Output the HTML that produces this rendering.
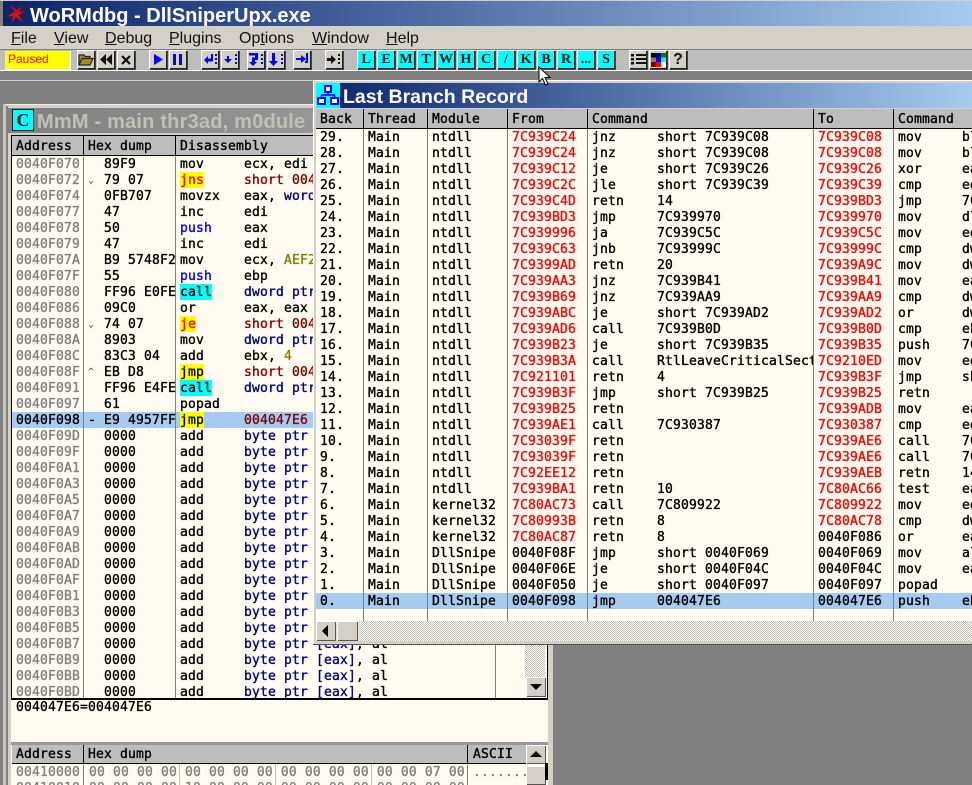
<!DOCTYPE html>
<html><head><meta charset="utf-8"><style>
html,body{margin:0;padding:0;width:972px;height:785px;overflow:hidden;background:#808080}
div,pre,svg{position:absolute}
pre{margin:0;font:13px/16px "DejaVu Sans Mono","Liberation Mono",monospace;letter-spacing:.17px;color:#000;overflow:hidden;-webkit-text-stroke:.35px currentColor}
pre b{font-weight:normal;display:inline-block;height:15px;vertical-align:top}
.r{color:#f00}.g{color:#808080}.n{color:#000080}.d{color:#800000}.o{color:#808000}.u{color:#00f}
.y{background:#ff0;box-shadow:0 -1px 0 #ff0}.c{background:#0ff;box-shadow:0 -1px 0 #0ff}
.btn{top:50px;width:18px;height:19px;background:#d4d0c8;box-shadow:inset 1px 1px 0 #fff,inset -1px -1px 0 #222,1px 1px 0 #444}
.cy{background:#0ff;font:bold 14px/19px "Liberation Serif",serif;color:#111;text-align:center}
.m{top:29px;font:16px/20px "Liberation Sans",sans-serif;color:#111;white-space:pre}
.m u{text-decoration:underline}
.h{background:#bdbdbd}
.ln{background:#808080;width:1px}
.bk{background:#000;width:1px}
.sb{background:#d4d0c8;box-shadow:inset 1px 1px 0 #fff,inset -1px -1px 0 #555}
.ck{background-color:#fff;background-image:conic-gradient(#c4c0b8 25%,#fff 0 50%,#c4c0b8 0 75%,#fff 0);background-size:2px 2px}
</style></head><body>

<div style="left:0;top:0;width:972px;height:1px;background:#d4d0c8"></div>
<div style="left:3px;top:1px;width:969px;height:25px;background:linear-gradient(90deg,#0a246a,#a6caf0)"></div>
<svg style="left:5px;top:3px" width="22" height="22" viewBox="0 0 22 22"><path d="M10 9L4 1L12 7L18 2L14 9L21 8L14 12L18 20L11 14L6 21L8 13L1 14L7 10Z" fill="#d81018" stroke="#701018" stroke-width=".6"/></svg>
<div style="left:30px;top:4px;font:bold 20px/24px 'Liberation Sans',sans-serif;color:#fff;white-space:pre">WoRMdbg - DllSniperUpx.exe</div>

<div style="left:0;top:26px;width:972px;height:23px;background:#d4d0c8"></div>
<div class="m" style="left:11px"><u>F</u>ile</div>
<div class="m" style="left:54px"><u>V</u>iew</div>
<div class="m" style="left:105px"><u>D</u>ebug</div>
<div class="m" style="left:169px"><u>P</u>lugins</div>
<div class="m" style="left:239px">Op<u>t</u>ions</div>
<div class="m" style="left:312px"><u>W</u>indow</div>
<div class="m" style="left:386px"><u>H</u>elp</div>

<div style="left:0;top:49px;width:972px;height:21px;background:#bdbdbd;border-top:1px solid #808080;box-sizing:border-box"></div>
<div style="left:0;top:70px;width:972px;height:1px;background:#fff"></div>
<div style="left:5px;top:51px;width:65px;height:18px;background:#ff0;border-right:1px solid #fff;border-bottom:1px solid #fff;font:12px/17px 'Liberation Sans',sans-serif;color:#f00;text-indent:3px">Paused</div>

<div class="btn" style="left:77px"><svg style="left:1px;top:3px" width="16" height="13" viewBox="0 0 16 13"><path d="M1 12V2H6L7 3.500H12V5.500H4L1 12H12L15 5.500H4" fill="#a09020" stroke="#222" stroke-width="1.200"/></svg></div>
<div class="btn" style="left:97px"><svg style="left:2px;top:4px" width="14" height="11" viewBox="0 0 14 11"><path d="M7 0V11L1 5.500ZM13 0V11L7 5.500Z" fill="#111"/></svg></div>
<div class="btn" style="left:117px"><svg style="left:4px;top:5px" width="10" height="10" viewBox="0 0 10 10"><path d="M1 1L9 9M9 1L1 9" stroke="#111" stroke-width="2.200"/></svg></div>
<div class="btn" style="left:149px"><svg style="left:4px;top:4px" width="11" height="11" viewBox="0 0 11 11"><path d="M1 0V11L10 5.500Z" fill="#00f"/></svg></div>
<div class="btn" style="left:169px"><svg style="left:4px;top:4px" width="10" height="11" viewBox="0 0 10 11"><path d="M0 0H3V11H0ZM6 0H9V11H6Z" fill="#00f"/></svg></div>
<div class="btn" style="left:201px"><svg style="left:2px;top:3px" width="15" height="13" viewBox="0 0 15 13"><path d="M1 7L5 3V5.500H8V1H10V8.500H5V11ZM12 1H14V3H12ZM12 5H14V7H12ZM12 9H14V11H12Z" fill="#00f"/></svg></div>
<div class="btn" style="left:221px"><svg style="left:2px;top:3px" width="15" height="13" viewBox="0 0 15 13"><path d="M4 3H6V6H9L5 10L1 6H4ZM12 1H14V3H12ZM12 5H14V7H12ZM12 9H14V11H12Z" fill="#00f"/></svg></div>
<div class="btn" style="left:247px"><svg style="left:2px;top:2px" width="15" height="15" viewBox="0 0 15 15"><path d="M0 1H9V8H6V10H8L4 14L0 10H3V5.500H6V3.500H0ZM12 2H14V4H12ZM12 6H14V8H12ZM12 10H14V12H12Z" fill="#00f"/></svg></div>
<div class="btn" style="left:267px"><svg style="left:2px;top:2px" width="15" height="15" viewBox="0 0 15 15"><path d="M3 1H6V9H9L4.500 14L0 9H3ZM12 2H14V4H12ZM12 6H14V8H12ZM12 10H14V12H12Z" fill="#00f"/></svg></div>
<div class="btn" style="left:293px"><svg style="left:3px;top:3px" width="13" height="13" viewBox="0 0 13 13"><path d="M0 5H5V2L10 6L5 10V7H0ZM10 0H12V10H9V8H10Z" fill="#00f"/></svg></div>
<div class="btn" style="left:325px"><svg style="left:2px;top:4px" width="15" height="11" viewBox="0 0 15 11"><path d="M0 4H4V1L9 5.500L4 10V7H0ZM11 0H13V2H11ZM11 4H13V6H11ZM11 8H13V10H11Z" fill="#111"/></svg></div>

<div class="btn cy" style="left:357px">L</div>
<div class="btn cy" style="left:377px">E</div>
<div class="btn cy" style="left:397px">M</div>
<div class="btn cy" style="left:417px">T</div>
<div class="btn cy" style="left:437px">W</div>
<div class="btn cy" style="left:457px">H</div>
<div class="btn cy" style="left:477px">C</div>
<div class="btn cy" style="left:497px">/</div>
<div class="btn cy" style="left:517px">K</div>
<div class="btn cy" style="left:537px">B</div>
<div class="btn cy" style="left:557px">R</div>
<div class="btn cy" style="left:577px">...</div>
<div class="btn cy" style="left:597px">S</div>

<div class="btn" style="left:629px"><svg style="left:2px;top:3px" width="15" height="13" viewBox="0 0 15 13"><path d="M0 1H3V3.500H0ZM5 1H15V3H5ZM0 5H3V7.500H0ZM5 5H15V7H5ZM0 9H3V11.500H0ZM5 9H15V11H5Z" fill="#111"/></svg></div>
<div class="btn" style="left:649px"><svg style="left:2px;top:3px" width="15" height="14" viewBox="0 0 15 14"><path fill="#000" d="M0 0h5v4.500H0z"/><path fill="#000080" d="M5 0h5v4.500H5z"/><path fill="#008000" d="M10 0h5v4.500h-5z"/><path fill="#808080" d="M0 4.500h5V9H0z"/><path fill="#00f" d="M5 4.500h5V9H5z"/><path fill="#0ff" d="M10 4.500h5V9h-5z"/><path fill="#800000" d="M0 9h5v5H0z"/><path fill="#f00" d="M5 9h5v5H5z"/><path fill="#fff" d="M10 9h5v5h-5z"/></svg></div>
<div class="btn" style="left:669px;font:bold 16px/19px 'Liberation Sans',sans-serif;text-align:center;color:#111">?</div>

<div style="left:0;top:80px;width:313px;height:1px;background:#d4d0c8"></div>

<!-- left MDI window -->
<div style="left:3px;top:104px;width:553px;height:681px;background:#d4d0c8;box-shadow:inset 1px 1px 0 #eee"></div>
<div style="left:3px;top:104px;width:3px;height:681px;background:#c8c4bc"></div>
<div style="left:6px;top:106px;width:2px;height:679px;background:#808080"></div>
<div style="left:553px;top:104px;width:3px;height:681px;background:#808080"></div>
<div style="left:8px;top:108px;width:540px;height:25px;background:linear-gradient(90deg,#7f7f7f,#a8a8a8)"></div>
<div style="left:12px;top:109px;width:22px;height:22px;background:#0ff;box-sizing:border-box;border:1px solid #222;font:bold 18px/20px 'Liberation Serif',serif;text-align:center;color:#111">C</div>
<div style="left:37px;top:110px;font:bold 20px/24px 'Liberation Sans',sans-serif;color:#c0c0b8;white-space:pre;letter-spacing:.2px">MmM - main thr3ad, m0dule DllSniperUpx</div>

<div style="left:11px;top:135px;width:537px;height:650px;background:#fffbf0"></div>
<div style="left:11px;top:135px;width:537px;height:1px;background:#000"></div>
<div class="bk" style="left:11px;top:135px;height:565px;width:1px"></div>
<div class="bk" style="left:547px;top:135px;height:565px;width:1px"></div>
<div class="h" style="left:12px;top:136px;width:535px;height:19px"></div>
<div style="left:12px;top:155px;width:535px;height:1px;background:#000"></div>
<div style="left:12px;top:412px;width:513px;height:16px;background:#a6caf0"></div>
<div class="ln" style="left:83px;top:156px;height:542px"></div>
<div class="ln" style="left:175px;top:156px;height:542px"></div>
<div class="ln" style="left:495px;top:156px;height:542px"></div>
<div class="bk" style="left:83px;top:136px;height:19px"></div>
<div class="bk" style="left:175px;top:136px;height:19px"></div>
<div class="bk" style="left:495px;top:136px;height:19px"></div>

<pre style="left:16px;top:139px">Address</pre>
<pre style="left:88px;top:139px">Hex dump</pre>
<pre style="left:180px;top:139px">Disassembly</pre>

<pre class="g" style="left:16px;top:157px;height:541px;width:66px">0040F070
0040F072
0040F074
0040F077
0040F078
0040F079
0040F07A
0040F07F
0040F080
0040F086
0040F088
0040F08A
0040F08C
0040F08F
0040F091
0040F097
<span style="color:#000">0040F098</span>
0040F09D
0040F09F
0040F0A1
0040F0A3
0040F0A5
0040F0A7
0040F0A9
0040F0AB
0040F0AD
0040F0AF
0040F0B1
0040F0B3
0040F0B5
0040F0B7
0040F0B9
0040F0BB
0040F0BD</pre>
<pre style="left:88px;top:173px;height:16px;width:12px;color:#444;-webkit-text-stroke:0;font-size:10px">&#x2304;</pre>
<pre style="left:88px;top:317px;height:16px;width:12px;color:#444;-webkit-text-stroke:0;font-size:10px">&#x2304;</pre>
<pre style="left:88px;top:365px;height:16px;width:12px;color:#444;-webkit-text-stroke:0;font-size:10px">^</pre>
<pre style="left:88px;top:413px;height:15px;width:12px">-</pre>
<pre style="left:104px;top:157px;height:541px;width:71px">89F9
79 07
0FB707
47
50
47
B9 5748F2AE
55
FF96 E0FE0000
09C0
74 07
8903
83C3 04
EB D8
FF96 E4FE0000
61
E9 4957FFFF
0000
0000
0000
0000
0000
0000
0000
0000
0000
0000
0000
0000
0000
0000
0000
0000
0000</pre>
<pre style="left:180px;top:157px;height:541px;width:315px">mov     ecx, edi
<b class="y r">jns</b>     <span class="d">short 004047DE</span>
movzx   eax, <span class="n">word ptr [edi]</span>
inc     edi
<span class="u">push</span>    eax
inc     edi
mov     ecx, <span class="o">AEF24857</span>
<span class="u">push</span>    ebp
<b class="c">call</b>    <span class="n">dword ptr [esi+FEE0]</span>
or      eax, eax
<b class="y r">je</b>      <span class="d">short 0040F091</span>
mov     <span class="n">dword ptr [ebx]</span>, eax
add     ebx, <span class="o">4</span>
<b class="y">jmp</b>     <span class="d">short 0040F069</span>
<b class="c">call</b>    <span class="n">dword ptr [esi+FEE4]</span>
popad
<b class="y">jmp</b>     <span class="d">004047E6</span>
add     <span class="n">byte ptr [eax]</span>, al
add     <span class="n">byte ptr [eax]</span>, al
add     <span class="n">byte ptr [eax]</span>, al
add     <span class="n">byte ptr [eax]</span>, al
add     <span class="n">byte ptr [eax]</span>, al
add     <span class="n">byte ptr [eax]</span>, al
add     <span class="n">byte ptr [eax]</span>, al
add     <span class="n">byte ptr [eax]</span>, al
add     <span class="n">byte ptr [eax]</span>, al
add     <span class="n">byte ptr [eax]</span>, al
add     <span class="n">byte ptr [eax]</span>, al
add     <span class="n">byte ptr [eax]</span>, al
add     <span class="n">byte ptr [eax]</span>, al
add     <span class="n">byte ptr [eax]</span>, al
add     <span class="n">byte ptr [eax]</span>, al
add     <span class="n">byte ptr [eax]</span>, al
add     <span class="n">byte ptr [eax]</span>, al</pre>

<div class="ck" style="left:525px;top:640px;width:20px;height:38px"></div>
<div class="sb" style="left:526px;top:677px;width:20px;height:20px"></div>
<svg style="left:530px;top:684px" width="12" height="7"><path d="M0 0H12L6 6Z" fill="#000"/></svg>

<div style="left:11px;top:698px;width:537px;height:2px;background:#000"></div>
<pre style="left:16px;top:700px">004047E6=004047E6</pre>

<div style="left:11px;top:742px;width:537px;height:3px;background:#9a9a9a"></div>
<div class="h" style="left:12px;top:745px;width:514px;height:18px"></div>
<div style="left:12px;top:763px;width:514px;height:1px;background:#000"></div>
<div class="bk" style="left:83px;top:745px;height:18px"></div>
<div class="bk" style="left:467px;top:745px;height:18px"></div>
<pre style="left:16px;top:747px">Address</pre>
<pre style="left:88px;top:747px">Hex dump</pre>
<pre style="left:473px;top:747px">ASCII</pre>
<div class="ln" style="left:83px;top:764px;height:21px"></div>
<div class="ln" style="left:179px;top:764px;height:21px;background:#c0c0c0"></div>
<div class="ln" style="left:275px;top:764px;height:21px;background:#c0c0c0"></div>
<div class="ln" style="left:371px;top:764px;height:21px;background:#c0c0c0"></div>
<div class="ln" style="left:467px;top:764px;height:21px"></div>
<pre class="g" style="left:16px;top:765px;height:20px">00410000
00410010</pre>
<pre class="g" style="left:89px;top:765px;height:20px">00 00 00 00 00 00 00 00 00 00 00 00 00 00 07 00
00 00 00 00 10 00 00 00 00 00 00 00 00 00 00 00</pre>
<pre class="g" style="left:473px;top:765px;height:20px;width:53px">.......
....&#x25ba;..</pre>
<div class="sb" style="left:526px;top:745px;width:20px;height:19px"></div>
<svg style="left:530px;top:751px" width="12" height="7"><path d="M0 6H12L6 0Z" fill="#000"/></svg>
<div class="sb" style="left:526px;top:766px;width:20px;height:19px"></div>
<div class="bk" style="left:545px;top:763px;height:17px;width:3px"></div>

<!-- LBR window -->
<div style="left:313px;top:80px;width:659px;height:565px;background:#d4d0c8;box-shadow:inset 1px 1px 0 #fff"></div>
<div style="left:313px;top:644px;width:659px;height:1px;background:#555"></div>
<div style="left:316px;top:83px;width:656px;height:25px;background:linear-gradient(90deg,#0a246a,#a6caf0)"></div>
<svg style="left:316px;top:83px" width="24" height="25" viewBox="0 0 24 25"><path d="M0 0H24V25H0Z" fill="#0ff"/><path d="M9 3H15V9H9ZM2 15H9V21H2ZM15 15H22V21H15Z" fill="#fff" stroke="#00f" stroke-width="2"/><path d="M12 9V12H5.500V15M12 12H18.500V15" fill="none" stroke="#00f" stroke-width="1.500"/></svg>
<div style="left:343px;top:85px;font:bold 19.5px/24px 'Liberation Sans',sans-serif;color:#fff;white-space:pre">Last Branch Record</div>

<div style="left:316px;top:109px;width:656px;height:512px;background:#fffbf0"></div>
<div class="h" style="left:316px;top:109px;width:656px;height:19px"></div>
<div style="left:316px;top:128px;width:656px;height:1px;background:#000"></div>
<div style="left:316px;top:593px;width:656px;height:16px;background:#a6caf0"></div>
<div class="ln" style="left:363px;top:129px;height:492px"></div>
<div class="ln" style="left:427px;top:129px;height:492px"></div>
<div class="ln" style="left:507px;top:129px;height:492px"></div>
<div class="ln" style="left:587px;top:129px;height:492px"></div>
<div class="ln" style="left:813px;top:129px;height:492px"></div>
<div class="ln" style="left:893px;top:129px;height:492px"></div>
<div class="bk" style="left:363px;top:109px;height:19px"></div>
<div class="bk" style="left:427px;top:109px;height:19px"></div>
<div class="bk" style="left:507px;top:109px;height:19px"></div>
<div class="bk" style="left:587px;top:109px;height:19px"></div>
<div class="bk" style="left:813px;top:109px;height:19px"></div>
<div class="bk" style="left:893px;top:109px;height:19px"></div>

<pre style="left:320px;top:112px">Back</pre>
<pre style="left:368px;top:112px">Thread</pre>
<pre style="left:432px;top:112px">Module</pre>
<pre style="left:512px;top:112px">From</pre>
<pre style="left:592px;top:112px">Command</pre>
<pre style="left:818px;top:112px">To</pre>
<pre style="left:898px;top:112px">Command</pre>

<pre style="left:320px;top:130px;width:43px">29.
28.
27.
26.
25.
24.
23.
22.
21.
20.
19.
18.
17.
16.
15.
14.
13.
12.
11.
10.
9.
8.
7.
6.
5.
4.
3.
2.
1.
0.</pre>
<pre style="left:368px;top:130px">Main
Main
Main
Main
Main
Main
Main
Main
Main
Main
Main
Main
Main
Main
Main
Main
Main
Main
Main
Main
Main
Main
Main
Main
Main
Main
Main
Main
Main
Main</pre>
<pre style="left:432px;top:130px;width:75px">ntdll
ntdll
ntdll
ntdll
ntdll
ntdll
ntdll
ntdll
ntdll
ntdll
ntdll
ntdll
ntdll
ntdll
ntdll
ntdll
ntdll
ntdll
ntdll
ntdll
ntdll
ntdll
ntdll
kernel32
kernel32
kernel32
DllSnipe
DllSnipe
DllSnipe
DllSnipe</pre>
<pre style="left:512px;top:130px"><span class="r">7C939C24
7C939C24
7C939C12
7C939C2C
7C939C4D
7C939BD3
7C939996
7C939C63
7C9399AD
7C939AA3
7C939B69
7C939ABC
7C939AD6
7C939B23
7C939B3A
7C921101
7C939B3F
7C939B25
7C939AE1
7C93039F
7C93039F
7C92EE12
7C939BA1
7C80AC73
7C80993B
7C80AC87</span>
0040F08F
0040F06E
0040F050
0040F098</pre>
<pre style="left:592px;top:130px">jnz
jnz
je
jle
retn
jmp
ja
jnb
retn
jnz
jnz
je
call
je
call
retn
jmp
retn
call
retn
retn
retn
retn
call
retn
retn
jmp
je
je
jmp</pre>
<pre style="left:657px;top:130px;width:156px">short 7C939C08
short 7C939C08
short 7C939C26
short 7C939C39
14
7C939970
7C939C5C
7C93999C
20
7C939B41
7C939AA9
short 7C939AD2
7C939B0D
short 7C939B35
RtlLeaveCriticalSection
4
short 7C939B25

7C930387



10
7C809922
8
8
short 0040F069
short 0040F04C
short 0040F097
004047E6</pre>
<pre style="left:818px;top:130px"><span class="r">7C939C08
7C939C08
7C939C26
7C939C39
7C939BD3
7C939970
7C939C5C
7C93999C
7C939A9C
7C939B41
7C939AA9
7C939AD2
7C939B0D
7C939B35
7C9210ED
7C939B3F
7C939B25
7C939ADB
7C930387
7C939AE6
7C939AE6
7C939AEB
7C80AC66
7C809922
7C80AC78</span>
0040F086
0040F069
0040F04C
0040F097
004047E6</pre>
<pre style="left:898px;top:130px">mov
mov
xor
cmp
jmp
mov
mov
cmp
mov
mov
cmp
or
cmp
push
mov
jmp
retn
mov
cmp
call
call
retn
test
mov
cmp
or
mov
mov
popad
push</pre>
<pre style="left:962px;top:130px;width:10px">bl
bl
eax
edx
7C
dl
ed
dw
dw
eax
dw
dw
eb
7C
ed
sh

eax
ed
7C
7C
14
eax
ed
dw
eax
al
eax

eb</pre>

<div class="ck" style="left:316px;top:621px;width:656px;height:20px"></div>
<div class="sb" style="left:316px;top:621px;width:20px;height:20px"></div>
<svg style="left:322px;top:625px" width="7" height="12"><path d="M6 0V12L0 6Z" fill="#000"/></svg>
<div class="sb" style="left:337px;top:621px;width:21px;height:20px"></div>

<!-- cursor -->
<svg style="left:538px;top:66px" width="14" height="20" viewBox="0 0 14 20"><path d="M1 1V16L4.500 12.500L7.500 19L10 18L7 11.500H12Z" fill="#fff" stroke="#000" stroke-width="1"/></svg>
</body></html>
